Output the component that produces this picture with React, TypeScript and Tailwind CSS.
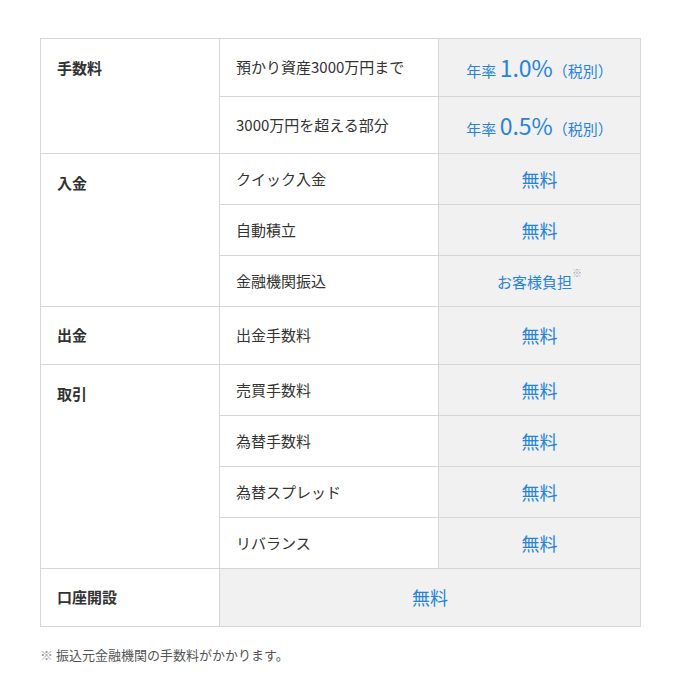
import React from "react";

const B = "text-[#2683dc]";
const cellL = "border border-[#d6d6d6] align-top pl-4 pt-[18px] font-bold text-[15px] text-[#333]";
const cellM = "border border-[#d6d6d6] pl-4 text-[15px] text-[#333]";
const cellR = "border border-[#d6d6d6] bg-[#f1f1f1] text-center";

function Free() {
  return <span className={`${B} text-[18px]`}>無料</span>;
}

function Rate({ v }: { v: string }) {
  return (
    <span className={`${B} whitespace-nowrap`}>
      <span className="text-[15px]">年率 </span>
      <span className="text-[23px]">{v}</span>
      <span className="text-[15px]">（税別）</span>
    </span>
  );
}

export default function App() {
  return (
    <div className="bg-white w-[698px] h-[686px] pt-[38px] px-[40px]" style={{ fontFamily: '"Noto Sans CJK JP", "Noto Sans", sans-serif' }}>
      <table className="w-[600px] border-collapse table-fixed">
        <colgroup>
          <col className="w-[179px]" />
          <col className="w-[219px]" />
          <col className="w-[202px]" />
        </colgroup>
        <tbody>
          <tr className="h-[58px]">
            <td rowSpan={2} className={cellL}>手数料</td>
            <td className={cellM}>預かり資産3000万円まで</td>
            <td className={cellR}><Rate v="1.0%" /></td>
          </tr>
          <tr className="h-[57px]">
            <td className={cellM}>3000万円を超える部分</td>
            <td className={cellR}><Rate v="0.5%" /></td>
          </tr>
          <tr className="h-[51px]">
            <td rowSpan={3} className={cellL}>入金</td>
            <td className={cellM}>クイック入金</td>
            <td className={cellR}><Free /></td>
          </tr>
          <tr className="h-[51px]">
            <td className={cellM}>自動積立</td>
            <td className={cellR}><Free /></td>
          </tr>
          <tr className="h-[51px]">
            <td className={cellM}>金融機関振込</td>
            <td className={cellR}>
              <span className={`${B} text-[15px]`}>お客様負担<sup className="text-[10px] text-[#9aa9bd] align-super">※</sup></span>
            </td>
          </tr>
          <tr className="h-[58px]">
            <td className={cellL.replace("align-top pl-4 pt-[18px]", "align-middle pl-4")}>出金</td>
            <td className={cellM}>出金手数料</td>
            <td className={cellR}><Free /></td>
          </tr>
          <tr className="h-[51px]">
            <td rowSpan={4} className={cellL}>取引</td>
            <td className={cellM}>売買手数料</td>
            <td className={cellR}><Free /></td>
          </tr>
          <tr className="h-[51px]">
            <td className={cellM}>為替手数料</td>
            <td className={cellR}><Free /></td>
          </tr>
          <tr className="h-[51px]">
            <td className={cellM}>為替スプレッド</td>
            <td className={cellR}><Free /></td>
          </tr>
          <tr className="h-[51px]">
            <td className={cellM}>リバランス</td>
            <td className={cellR}><Free /></td>
          </tr>
          <tr className="h-[58px]">
            <td className="border border-[#d6d6d6] align-middle pl-4 font-bold text-[15px] text-[#333]">口座開設</td>
            <td colSpan={2} className={cellR}><Free /></td>
          </tr>
        </tbody>
      </table>
      <p className="mt-[18px] text-[13px] text-[#555]"><span className="text-[#999]">※</span> 振込元金融機関の手数料がかかります。</p>
    </div>
  );
}
